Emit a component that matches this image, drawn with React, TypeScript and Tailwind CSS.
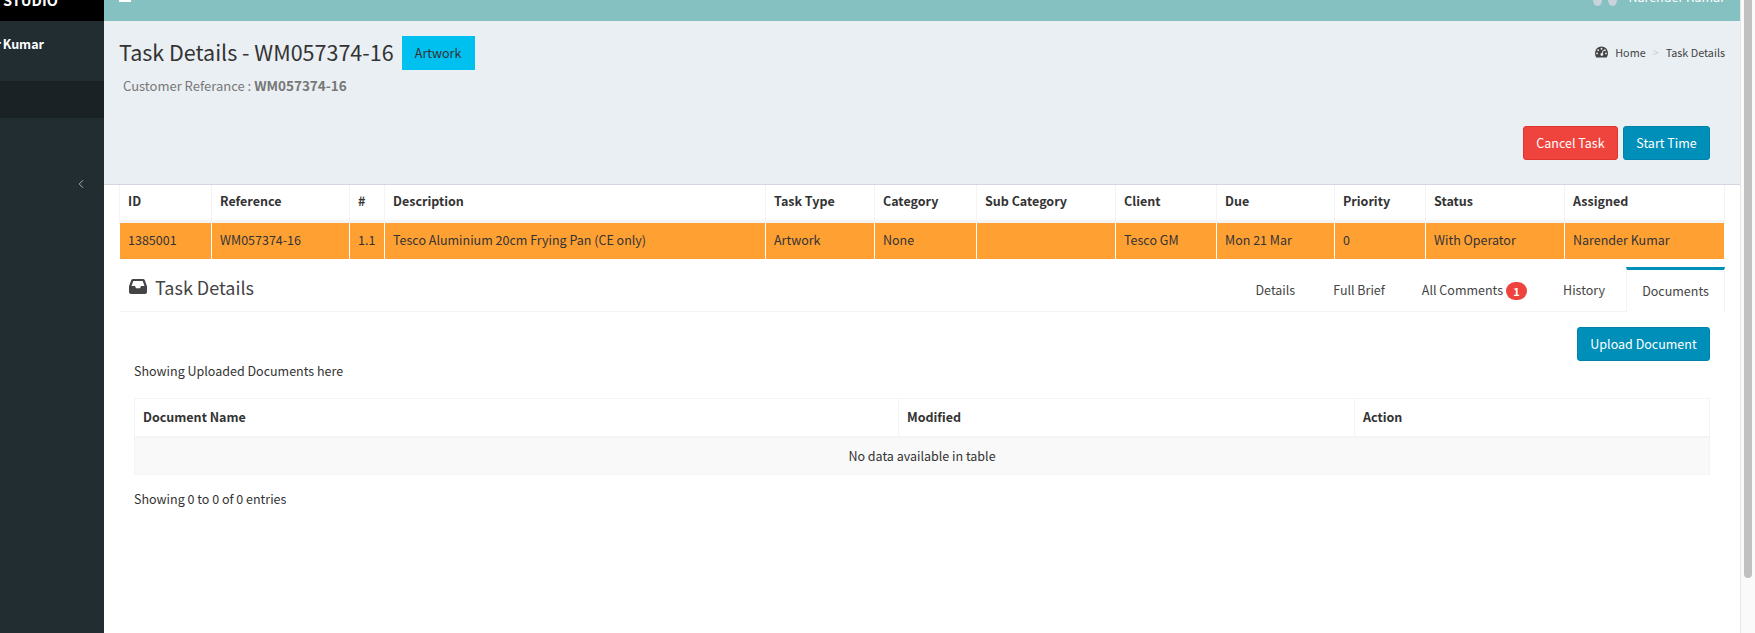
import React from 'react';
import { ChevronLeft } from 'lucide-react';

const taskCols = [
  { label: 'ID', value: '1385001', width: 92 },
  { label: 'Reference', value: 'WM057374-16', width: 138 },
  { label: '#', value: '1.1', width: 35 },
  { label: 'Description', value: 'Tesco Aluminium 20cm Frying Pan (CE only)', width: 381 },
  { label: 'Task Type', value: 'Artwork', width: 109 },
  { label: 'Category', value: 'None', width: 102 },
  { label: 'Sub Category', value: '', width: 139 },
  { label: 'Client', value: 'Tesco GM', width: 101 },
  { label: 'Due', value: 'Mon 21 Mar', width: 118 },
  { label: 'Priority', value: '0', width: 91 },
  { label: 'Status', value: 'With Operator', width: 139 },
  { label: 'Assigned', value: 'Narender Kumar', width: 160 },
];

const docCols = [
  { label: 'Document Name', width: 764 },
  { label: 'Modified', width: 456 },
  { label: 'Action', width: 355 },
];

const GaugeIcon = () => (
  <svg width="13" height="12" viewBox="0 0 14 12" className="mr-[7px]">
    <path
      fill="#444"
      fillRule="evenodd"
      d="M7 0a7 7 0 0 1 7 7c0 1.9-.6 3.6-1.4 5H1.400C.6 10.600 0 8.900 0 7a7 7 0 0 1 7-7ZM7 1.500a1 1 0 1 0 0 2 1 1 0 0 0 0-2ZM3.400 3a1 1 0 1 0 0 2 1 1 0 0 0 0-2ZM10.600 3a1 1 0 1 0 0 2 1 1 0 0 0 0-2ZM2.200 6.500a1 1 0 1 0 0 2 1 1 0 0 0 0-2ZM11.800 6.500a1 1 0 1 0 0 2 1 1 0 0 0 0-2ZM8.600 3.800 7.300 7.200a1.500 1.500 0 1 0 1 .3l1.300-3.400Z"
    />
  </svg>
);

const InboxIcon = () => (
  <svg width="18" height="15" viewBox="0 0 18 15" className="mr-[8px]">
    <path
      fill="#444"
      fillRule="evenodd"
      d="M4 0h10c.8 0 1.400.4 1.700 1.100l2 5.400c.2.400.3.800.3 1.200V13c0 1.100-.9 2-2 2H2c-1.100 0-2-.9-2-2V7.700c0-.4.1-.8.300-1.200l2-5.400C2.600.4 3.200 0 4 0ZM4.300 2 2.500 7H6l1 2.200h4L12 7h3.500l-1.800-5Z"
    />
  </svg>
);

const Sidebar = () => (
  <aside className="w-[104px] shrink-0 bg-[#222d32] flex flex-col overflow-hidden">
    <div className="h-[21px] bg-black flex items-end pl-[3px] pb-[10px] overflow-hidden">
      <span className="text-white text-[14.500px] leading-[22px] font-bold whitespace-nowrap">STUDIO</span>
    </div>
    <div className="h-[60px] pt-[14px] pr-[60px] flex justify-end">
      <span className="text-white text-[12.500px] leading-[18px] font-bold whitespace-nowrap [word-spacing:-1px]">Narender Kumar</span>
    </div>
    <div className="h-[37px] bg-[#1a2226]" />
    <div className="flex justify-end pt-[58px] pr-[16px]">
      <ChevronLeft className="text-[#b8c7ce] w-[14px] h-[16px]" strokeWidth={1.5} />
    </div>
  </aside>
);

const TopBar = () => (
  <header className="h-[21px] bg-[#86c1c2] flex items-end justify-between overflow-hidden pl-[15px] pr-[15px]">
    <div className="w-[12px] h-[2px] bg-white mb-[19px]" />
    <div className="flex items-end">
      <svg width="24" height="6" viewBox="0 0 24 6" className="mb-[15px] mr-[11px]">
        <ellipse cx="4.500" cy="0" rx="4.500" ry="6" fill="#c8d3dc" />
        <ellipse cx="19.500" cy="0" rx="4.500" ry="6" fill="#c8d3dc" />
      </svg>
      <span className="text-white text-[12.500px] leading-[18px] mb-[15px] whitespace-nowrap">Narender Kumar</span>
    </div>
  </header>
);

const PageHeader = () => (
  <section className="h-[164px] bg-[#eaeff3] border-b border-[#d2d6de] pl-[15px] pr-[30px] pt-[15px] flex flex-col">
    <div className="flex items-start justify-between">
      <div className="flex items-center gap-[8px]">
        <h1 className="text-[21.500px] leading-[30px] text-[#333] mb-[3px]">Task Details - WM057374-16</h1>
        <span className="h-[34px] w-[73px] bg-[#00c0ef] text-[#333] text-[12.500px] flex items-center justify-center">Artwork</span>
      </div>
      <div className="flex items-center text-[10.800px] leading-[16px] text-[#444] mt-[8px] -mr-[15px]">
        <GaugeIcon />
        <span>Home</span>
        <span className="text-[#ccc] mx-[7px]">&gt;</span>
        <span>Task Details</span>
      </div>
    </div>
    <p className="ml-[4px] mt-[5px] text-[13px] leading-[20px] text-[#777]">
      Customer Referance : <b className="text-[13.500px] font-bold">WM057374-16</b>
    </p>
    <div className="flex justify-end gap-[5px] mt-[30px]">
      <button className="h-[34px] w-[95px] rounded-[3px] bg-[#ef443e] border border-[#e0352f] text-white text-[12.500px]">Cancel Task</button>
      <button className="h-[34px] w-[87px] rounded-[3px] bg-[#008fb9] border border-[#0082aa] text-white text-[12.500px]">Start Time</button>
    </div>
  </section>
);

const TaskTable = () => (
  <table className="w-[1605px] table-fixed border-collapse text-[12.500px] text-[#333]">
    <colgroup>
      {taskCols.map((c) => (
        <col key={c.label} style={{ width: c.width }} />
      ))}
    </colgroup>
    <thead>
      <tr className="h-[36px] bg-white">
        {taskCols.map((c) => (
          <th key={c.label} className="border-x border-b-[3px] border-[#f4f4f4] px-[8px] pb-[2px] text-left font-bold">{c.label}</th>
        ))}
      </tr>
    </thead>
    <tbody>
      <tr className="h-[38px] bg-[#ffa033]">
        {taskCols.map((c) => (
          <td key={c.label} className="border-x border-white px-[8px] pb-[1px] whitespace-nowrap">{c.value}</td>
        ))}
      </tr>
    </tbody>
  </table>
);

const Tabs = () => (
  <div className="mt-[8px] h-[45px] border-b border-[#f4f4f4] flex items-stretch justify-between">
    <div className="flex items-center pl-[10px] pb-[5px] text-[#444]">
      <InboxIcon />
      <span className="text-[18px] leading-[24px]">Task Details</span>
    </div>
    <nav className="flex text-[12.500px] text-[#444]">
      <span className="px-[15px] pt-[3px] mr-[8px] flex items-center">Details</span>
      <span className="px-[15px] pt-[3px] mr-[7px] flex items-center">Full Brief</span>
      <span className="px-[15px] pt-[3px] mr-[6px] flex items-center">
        All Comments
        <b className="ml-[3px] w-[21px] h-[18px] rounded-full bg-[#ef443e] text-white text-[11px] leading-[18px] text-center font-bold">1</b>
      </span>
      <span className="px-[15px] pt-[3px] mr-[6px] flex items-center">History</span>
      <span className="w-[99px] border-t-[3px] border-x border-x-[#f4f4f4] border-t-[#008fb9] -mb-px bg-white flex items-center justify-center">Documents</span>
    </nav>
  </div>
);

const DocumentsPanel = () => (
  <div className="pl-[15px] pr-[15px] text-[12.500px] text-[#333]">
    <div className="flex justify-end pt-[15px]">
      <button className="h-[34px] w-[133px] rounded-[3px] bg-[#008fb9] border border-[#0082aa] text-white text-[12.500px]">Upload Document</button>
    </div>
    <p className="leading-[20px]">Showing Uploaded Documents here</p>
    <table className="mt-[17px] w-[1575px] table-fixed border-collapse">
      <colgroup>
        {docCols.map((c) => (
          <col key={c.label} style={{ width: c.width }} />
        ))}
      </colgroup>
      <thead>
        <tr className="h-[38px]">
          {docCols.map((c) => (
            <th key={c.label} className="border border-b-2 border-[#f4f4f4] px-[8px] text-left font-bold">{c.label}</th>
          ))}
        </tr>
      </thead>
      <tbody>
        <tr className="h-[38px] bg-[#f9f9f9]">
          <td colSpan={3} className="border border-[#f4f4f4] pt-[1px] text-center">No data available in table</td>
        </tr>
      </tbody>
    </table>
    <p className="mt-[14px] leading-[20px]">Showing 0 to 0 of 0 entries</p>
  </div>
);

const Scrollbar = () => (
  <div className="w-[15px] shrink-0 bg-[#fafafa] border-l border-[#e8e8e8] pl-[3px]">
    <div className="w-[8px] h-[578px] rounded-b-[4px] bg-[#c1c1c1]" />
  </div>
);

export default function App() {
  return (
    <div className="flex w-[1755px] h-[633px] overflow-hidden bg-white font-['Noto_Sans_CJK_SC','Noto_Sans',sans-serif]">
      <Sidebar />
      <main className="flex-1 min-w-0 flex flex-col">
        <TopBar />
        <PageHeader />
        <div className="pl-[15px] pr-[15px] flex flex-col">
          <TaskTable />
          <Tabs />
          <DocumentsPanel />
        </div>
      </main>
      <Scrollbar />
    </div>
  );
}
